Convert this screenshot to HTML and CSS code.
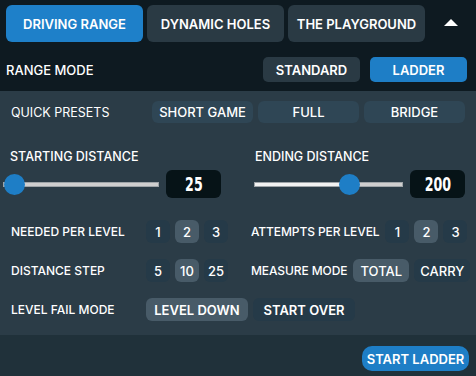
FILE: index.html
```html
<!DOCTYPE html>
<html lang="en">
<head>
    <meta charset="UTF-8">
    <meta name="viewport" content="width=device-width, initial-scale=1.0">
    <title>Range Setup</title>
    <link rel="stylesheet" href="styles.css">
</head>
<body>
    <div class="topbar">
        <div class="tabs">
            <button class="tab active">DRIVING RANGE</button>
            <button class="tab">DYNAMIC HOLES</button>
            <button class="tab">THE PLAYGROUND</button>
            <button class="collapse"><span class="arrow"></span></button>
        </div>
        <div class="mode-row">
            <span class="mode-label">RANGE MODE</span>
            <div class="mode-btns">
                <button class="mode-btn">STANDARD</button>
                <button class="mode-btn active">LADDER</button>
            </div>
        </div>
    </div>

    <div class="panel">
        <div class="presets">
            <span class="presets-label">QUICK PRESETS</span>
            <button class="preset">SHORT GAME</button>
            <button class="preset">FULL</button>
            <button class="preset">BRIDGE</button>
        </div>

        <div class="distances">
            <div class="dist dist-start">
                <div class="dist-label">STARTING DISTANCE</div>
                <div class="dist-control">
                    <input type="range" class="slider" min="25" max="300" value="25" style="--fill: 0%">
                    <div class="dist-value"><span>25</span></div>
                </div>
            </div>
            <div class="dist dist-end">
                <div class="dist-label">ENDING DISTANCE</div>
                <div class="dist-control">
                    <input type="range" class="slider" min="0" max="300" value="200" style="--fill: 66%">
                    <div class="dist-value"><span>200</span></div>
                </div>
            </div>
        </div>

        <div class="options">
            <div class="opt">
                <span class="opt-label fixed">NEEDED PER LEVEL</span>
                <button class="num">1</button>
                <button class="num on">2</button>
                <button class="num">3</button>
            </div>
            <div class="opt">
                <span class="opt-label">ATTEMPTS PER LEVEL</span>
                <button class="num">1</button>
                <button class="num on">2</button>
                <button class="num">3</button>
            </div>
            <div class="opt">
                <span class="opt-label fixed">DISTANCE STEP</span>
                <button class="num">5</button>
                <button class="num on">10</button>
                <button class="num">25</button>
            </div>
            <div class="opt">
                <span class="opt-label">MEASURE MODE</span>
                <button class="word on">TOTAL</button>
                <button class="word">CARRY</button>
            </div>
            <div class="opt">
                <span class="opt-label fixed">LEVEL FAIL MODE</span>
                <button class="wide on">LEVEL DOWN</button>
                <button class="wide">START OVER</button>
            </div>
        </div>
    </div>

    <div class="footer">
        <button class="start">START LADDER</button>
    </div>
</body>
</html>
```

FILE: styles.css
```css
body {
    margin: 0;
    padding: 0;
    width: 476px;
    height: 376px;
    background-color: #20313a;
    font-family: Inter, "Noto Sans", sans-serif;
    color: #fff;
    overflow: hidden;
}

button {
    font-family: inherit;
    color: #fff;
    border: none;
    padding: 0;
    cursor: pointer;
    white-space: nowrap;
    flex-shrink: 0;
}

/* top bar */
.topbar {
    background-color: #0e1a21;
    height: 91px;
    box-sizing: border-box;
    padding: 5px 0 0 6px;
}

.tabs {
    display: flex;
    gap: 4px;
}

.tab {
    width: 137px;
    height: 37px;
    border-radius: 6px;
    background-color: #2a3a44;
    font-size: 13px;
    font-weight: 600;
}

.tab.active {
    background-color: #1e80c9;
}

.collapse {
    background: none;
    width: 46px;
    height: 37px;
    display: flex;
    justify-content: center;
    align-items: center;
}

.arrow {
    width: 0;
    height: 0;
    border-left: 7px solid transparent;
    border-right: 7px solid transparent;
    border-bottom: 7px solid #fff;
    margin-left: -2px;
    margin-top: -2px;
}

.mode-row {
    display: flex;
    justify-content: space-between;
    align-items: center;
    margin-top: 15px;
    padding-right: 9px;
}

.mode-label {
    font-size: 13px;
    font-weight: 500;
}

.mode-btns {
    display: flex;
    gap: 10px;
}

.mode-btn {
    width: 97px;
    height: 25px;
    border-radius: 5px;
    background-color: #2a3a44;
    font-size: 13px;
    font-weight: 600;
}

.mode-btn.active {
    background-color: #1e7ec6;
}

/* panel */
.panel {
    background-color: #2b3c47;
    height: 244px;
    box-sizing: border-box;
    padding-top: 10px;
}

.presets {
    display: flex;
    align-items: center;
    gap: 5px;
    padding-left: 11px;
}

.presets-label {
    width: 136px;
    font-size: 12.5px;
    font-weight: 400;
    white-space: nowrap;
}

.preset {
    width: 101px;
    height: 22px;
    border-radius: 6px;
    background-color: #2f4655;
    font-size: 13px;
    font-weight: 500;
}

.distances {
    display: flex;
    gap: 33px;
    padding-left: 3px;
    margin-top: 26px;
}

.dist-start {
    width: 218px;
}

.dist-end {
    width: 211px;
}

.dist-label {
    font-size: 12.5px;
    font-weight: 500;
    line-height: 16px;
    white-space: nowrap;
}

.dist-start .dist-label {
    padding-left: 7px;
}

.dist-end .dist-label {
    padding-left: 1px;
}

.dist-control {
    display: flex;
    align-items: center;
    gap: 7px;
    margin-top: 5px;
}

.slider {
    -webkit-appearance: none;
    appearance: none;
    flex: 1;
    min-width: 0;
    margin: 0;
    height: 28px;
    background: transparent;
}

.slider::-webkit-slider-runnable-track {
    height: 5px;
    background: linear-gradient(to right, #f2f2f2 var(--fill), #cfcfcf var(--fill));
    border: 1px solid #9ea4a8;
    box-sizing: border-box;
}

.slider::-webkit-slider-thumb {
    -webkit-appearance: none;
    width: 21px;
    height: 21px;
    border-radius: 50%;
    background-color: #1e7ec6;
    border: none;
    margin-top: -9px;
}

.dist-value {
    width: 55px;
    height: 28px;
    border-radius: 6px;
    background-color: #061317;
    display: flex;
    justify-content: center;
    align-items: center;
    font-family: "DejaVu Sans Condensed", "DejaVu Sans", sans-serif;
    font-stretch: condensed;
    font-weight: bold;
    font-size: 19px;
}

/* the numbers are a tall narrow face; squeeze the nearest one we have */
.dist-value span {
    display: inline-block;
    transform: scaleX(0.74);
}

.options {
    display: grid;
    grid-template-columns: 240px 225px;
    row-gap: 16px;
    padding-left: 11px;
    margin-top: 22px;
}

.opt {
    display: flex;
    align-items: center;
    gap: 5px;
}

.opt-label {
    font-size: 12px;
    font-weight: 500;
    margin-right: 1px;
    letter-spacing: -0.1px;
    white-space: nowrap;
}

.opt-label.fixed {
    width: 130px;
    margin-right: 0;
    letter-spacing: 0;
    flex-shrink: 0;
}

.num,
.word,
.wide {
    height: 23px;
    border-radius: 6px;
    background-color: #253a48;
    font-size: 13px;
    font-weight: 500;
}

.num {
    width: 24px;
}

.word {
    width: 56px;
}

.wide {
    width: 102px;
    font-weight: 600;
}

.num.on,
.word.on,
.wide.on {
    background-color: #485b68;
}

/* footer */
.footer {
    display: flex;
    justify-content: flex-end;
    padding: 11px 7px 0 0;
}

.start {
    width: 107px;
    height: 25px;
    border-radius: 10px;
    background-color: #1e7ec6;
    font-size: 13px;
    font-weight: 600;
}
```
